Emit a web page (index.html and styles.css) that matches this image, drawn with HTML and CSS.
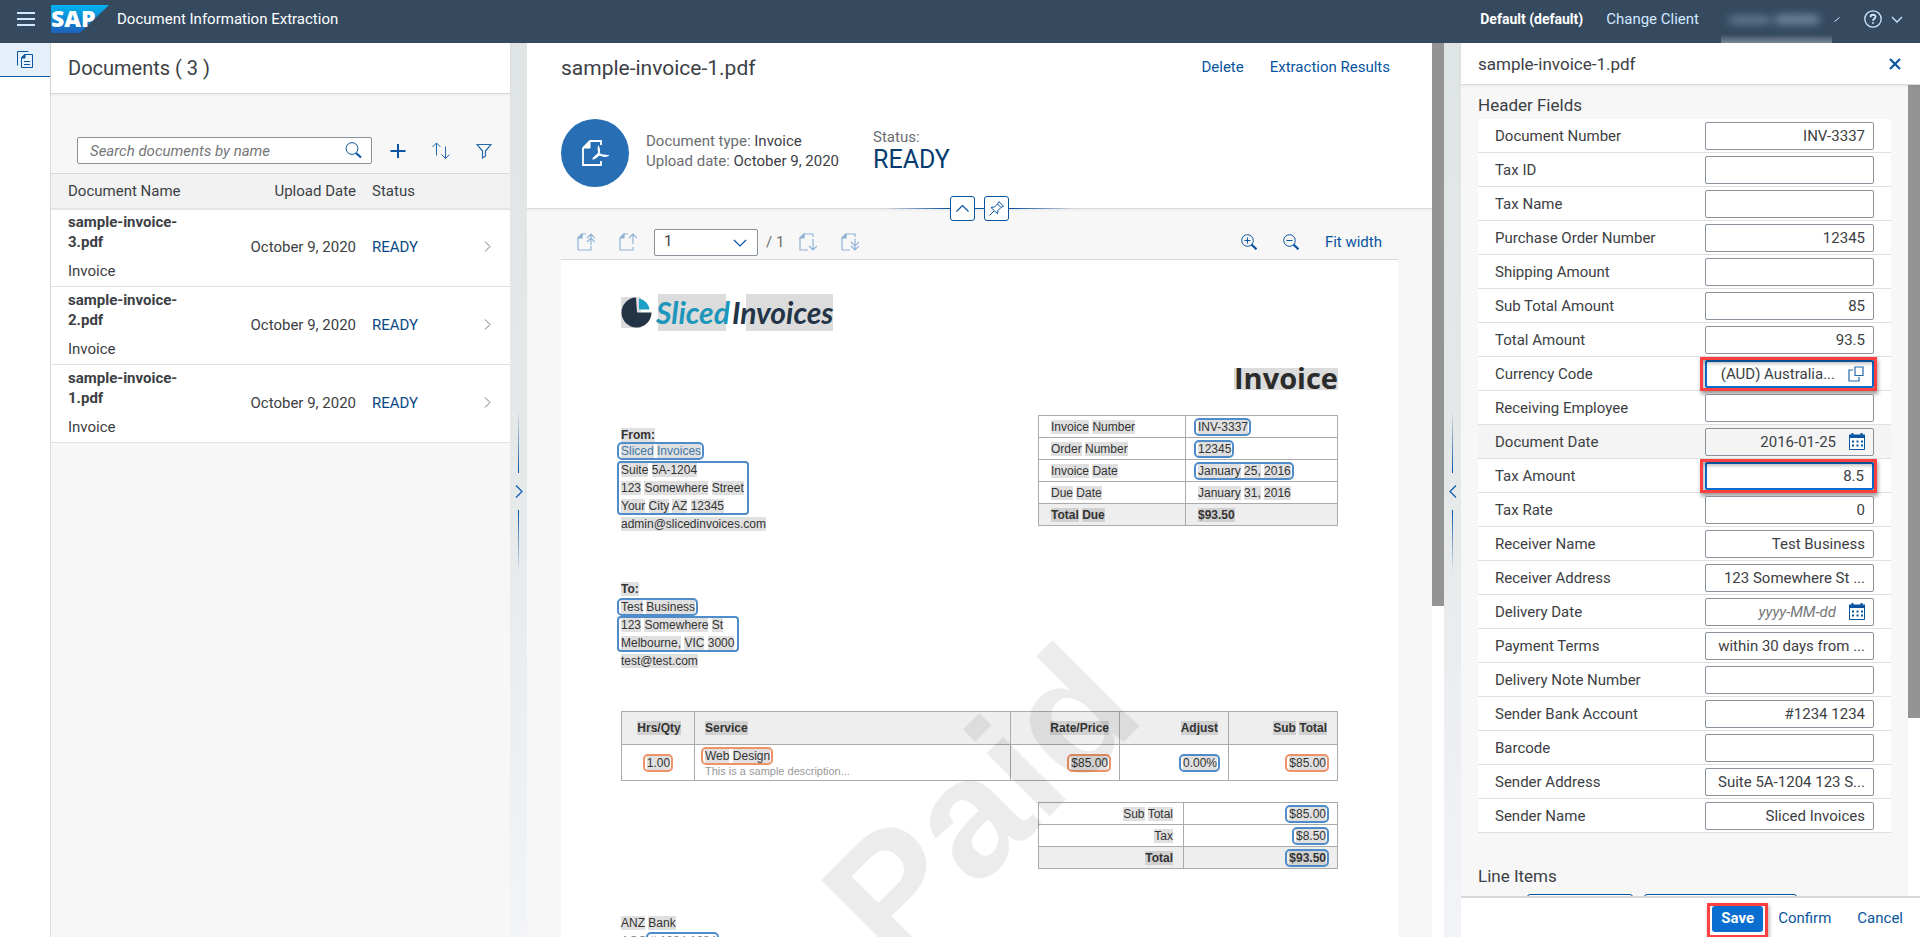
FILE: index.html
```html
<!DOCTYPE html>
<html lang="en">
<head>
<meta charset="utf-8">
<title>Document Information Extraction</title>
<link rel="stylesheet" href="styles.css">
</head>
<body>
<div class="app">
  <header class="shell">
    <button class="icon-btn menu" aria-label="Menu"><svg width="18" height="14" viewBox="0 0 18 14"><path d="M0 1h18M0 7h18M0 13h18" stroke="#d1e8ff" stroke-width="2"/></svg></button>
    <svg class="logo" width="58" height="28" viewBox="0 0 58 28" role="img" aria-label="SAP">
      <defs><linearGradient id="sap" x1="0" y1="0" x2="0" y2="1"><stop offset="0" stop-color="#00b4f0"/><stop offset="1" stop-color="#1e5fbb"/></linearGradient></defs>
      <path d="M0 0H58L29 28H0Z" fill="url(#sap)"/>
      <text x="0" y="22" class="logo-text">SAP</text>
    </svg>
    <h1 class="shell-title">Document Information Extraction</h1>
    <span class="client">Default (default)</span>
    <a class="shell-link" href="#">Change Client</a>
    <span class="user"><i class="smudge"></i><i class="smudge wide"></i></span>
    <svg class="tick" width="6" height="5" viewBox="0 0 6 5"><path d="M0.500 4.500L5.500 0.500" stroke="#d1e8ff" fill="none"/></svg>
    <button class="icon-btn help" aria-label="Help"><svg width="18" height="18" viewBox="0 0 18 18" fill="none" stroke="#d1e8ff" stroke-width="1.300"><circle cx="9" cy="9" r="8.200"/><path d="M6.500 7.200C6.500 3.900 11.600 4 11.500 7C11.400 8.900 9 8.700 9 10.800M9 12.200V13.800" stroke-width="1.800"/></svg></button>
    <svg width="12" height="7" viewBox="0 0 12 7" fill="none" stroke="#d1e8ff" stroke-width="1.300"><path d="M1 1l5 5 5-5"/></svg>
  </header>

  <div class="workspace">
    <nav class="side">
      <a class="side-item" href="#" aria-label="Documents"><svg width="16" height="18" viewBox="0 0 16 18" fill="none" stroke="#0854a0"><path d="M0.500 14.500V0.500H11.500M7.500 3.500H15.500V16.500H4.500V6.500L7.500 3.500ZM7.500 3.500V6.500H4.500M7 10.500h6M7 13.500h6"/><path d="M4.500 7L8 3.500V7Z" fill="#0854a0"/></svg></a>
    </nav>

    <section class="docs">
      <h2 class="docs-title">Documents ( 3 )</h2>
      <div class="docs-tools">
        <div class="search">
          <input type="search" aria-label="Search documents by name" placeholder="Search documents by name">
          <svg width="17" height="17" viewBox="0 0 17 17" fill="none" stroke="#0854a0"><circle cx="7" cy="6.500" r="5.900"/><path d="M11 11l5 4.500" stroke-width="2.200"/></svg>
        </div>
        <button class="icon-btn" aria-label="Add"><svg width="16" height="16" viewBox="0 0 16 16"><path d="M8 1v14M0.500 8h15" stroke="#0854a0" stroke-width="2"/></svg></button>
        <button class="icon-btn" aria-label="Sort"><svg width="18" height="18" viewBox="0 0 18 18" fill="none" stroke="#2469af"><path d="M4.500 13.500V1M0.500 5l4-4 4 4M13.500 4.500V16.500M9.500 12.500l4 4 4-4"/></svg></button>
        <button class="icon-btn" aria-label="Filter"><svg width="16" height="16" viewBox="0 0 16 16" fill="none" stroke="#2469af" stroke-width="1.200"><path d="M1 1.500H15L9.500 8V13L6.500 15V8Z"/></svg></button>
      </div>
      <table class="doc-table">
        <thead><tr><th class="c-name">Document Name</th><th class="c-date">Upload Date</th><th class="c-status">Status</th><th class="c-nav"></th></tr></thead>
        <tbody>
          <tr><td><b>sample-invoice-<br>3.pdf</b><span>Invoice</span></td><td class="c-date">October 9, 2020</td><td class="ready">READY</td><td class="c-nav"><svg width="7" height="11" viewBox="0 0 7 11" fill="none" stroke="#777"><path d="M1 0.500l5 5-5 5"/></svg></td></tr>
          <tr><td><b>sample-invoice-<br>2.pdf</b><span>Invoice</span></td><td class="c-date">October 9, 2020</td><td class="ready">READY</td><td class="c-nav"><svg width="7" height="11" viewBox="0 0 7 11" fill="none" stroke="#777"><path d="M1 0.500l5 5-5 5"/></svg></td></tr>
          <tr><td><b>sample-invoice-<br>1.pdf</b><span>Invoice</span></td><td class="c-date">October 9, 2020</td><td class="ready">READY</td><td class="c-nav"><svg width="7" height="11" viewBox="0 0 7 11" fill="none" stroke="#777"><path d="M1 0.500l5 5-5 5"/></svg></td></tr>
        </tbody>
      </table>
    </section>

    <div class="splitter"><i class="line up"></i><svg width="8" height="13" viewBox="0 0 8 13" fill="none" stroke="#0a5cb0" stroke-width="1.200"><path d="M1 0.500l6 6-6 6"/></svg><i class="line down"></i></div>

    <main class="viewer">
      <div class="viewer-body">
        <div class="viewer-head">
          <div class="head-row">
            <h2>sample-invoice-1.pdf</h2>
            <a href="#">Delete</a>
            <a href="#">Extraction Results</a>
          </div>
          <div class="head-info">
            <span class="avatar"><svg width="27" height="26" viewBox="0 0 27 26" fill="none" stroke="#fff" stroke-width="1.800"><path d="M19 5V1H8L1 8V25H19V21"/><path d="M1 8L8 1V8Z" fill="#fff" stroke-width="1"/><path d="M16.500 6.500C18 9 17 12 17.500 13.500C19 15.500 22 15 26 15.500C22 17.500 19.500 15.500 17.500 15C15.500 15.500 13.500 19 11 19C12 16 15.500 15.500 16.500 13C17 11 15.500 8 16.500 6.500Z" fill="#fff" stroke-width="1.200"/></svg></span>
            <div class="attrs">
              <p><span>Document type:</span> Invoice</p>
              <p><span>Upload date:</span> October 9, 2020</p>
            </div>
            <div class="status"><p>Status:</p><strong>READY</strong></div>
          </div>
          <div class="head-toggle">
            <button aria-label="Collapse header"><svg width="13" height="7" viewBox="0 0 13 7" fill="none" stroke="#0854a0" stroke-width="1.200"><path d="M0.500 6.500l6-6 6 6"/></svg></button>
            <button aria-label="Pin header"><svg width="15" height="15" viewBox="0 0 15 15" fill="none" stroke="#0854a0"><path d="M0.500 14.500L5 10M2 6.500L8.500 12.800L9 9.500L12 6.500L14.500 5L9.800 0.600L8.500 3L5.500 6ZM8.500 3L12 6.500"/></svg></button>
          </div>
        </div>

        <div class="pager">
          <button class="icon-btn" disabled aria-label="First page"><svg width="18" height="18" viewBox="0 0 18 18" fill="none" stroke="#8fb3d6" stroke-width="1.200"><path d="M9 1H5L1 5V17H14V13"/><path d="M1 5L5 1V5Z" fill="#8fb3d6"/><path d="M14 12V1M10 5l4-4 4 4M10 9l4-4 4 4"/></svg></button>
          <button class="icon-btn" disabled aria-label="Previous page"><svg width="18" height="18" viewBox="0 0 18 18" fill="none" stroke="#8fb3d6" stroke-width="1.200"><path d="M9 1H5L1 5V17H14V14"/><path d="M1 5L5 1V5Z" fill="#8fb3d6"/><path d="M14 11V1M10 5l4-4 4 4"/></svg></button>
          <span class="page-pick"><select aria-label="Page"><option>1</option></select><svg width="14" height="8" viewBox="0 0 14 8" fill="none" stroke="#0854a0" stroke-width="1.200"><path d="M1 1l6 6 6-6"/></svg></span>
          <span class="total">/ 1</span>
          <button class="icon-btn" disabled aria-label="Next page"><svg width="18" height="18" viewBox="0 0 18 18" fill="none" stroke="#8fb3d6" stroke-width="1.200"><path d="M9 17H1V5L5 1H14V4"/><path d="M1 5L5 1V5Z" fill="#8fb3d6"/><path d="M14 6V17M10 13l4 4 4-4"/></svg></button>
          <button class="icon-btn" disabled aria-label="Last page"><svg width="18" height="18" viewBox="0 0 18 18" fill="none" stroke="#8fb3d6" stroke-width="1.200"><path d="M9 17H1V5L5 1H14V4"/><path d="M1 5L5 1V5Z" fill="#8fb3d6"/><path d="M14 6V17M10 13l4 4 4-4M10 9l4 4 4-4"/></svg></button>
          <span class="grow"></span>
          <button class="icon-btn" aria-label="Zoom in"><svg width="16" height="16" viewBox="0 0 16 16" fill="none" stroke="#0854a0"><circle cx="6.500" cy="6.500" r="5.800"/><path d="M3.500 6.500h6M6.500 3.500v6"/><path d="M10.500 10.500l5 4.800" stroke-width="2.200"/></svg></button>
          <button class="icon-btn" aria-label="Zoom out"><svg width="16" height="16" viewBox="0 0 16 16" fill="none" stroke="#0854a0"><circle cx="6.500" cy="6.500" r="5.800"/><path d="M3.500 6.500h6"/><path d="M10.500 10.500l5 4.800" stroke-width="2.200"/></svg></button>
          <a href="#">Fit width</a>
        </div>

        <article class="page">
          <span class="watermark">Paid</span>
          <div class="brand">
            <svg width="31" height="31" viewBox="0 0 31 31"><path d="M0 0H20V31H0Z" fill="#dcdcdc"/><path d="M15 0.500A15 15 0 1 0 30.500 15.500H16Z" fill="#233447"/><path d="M18 1.500A13 13 0 0 1 28.500 12.500H18Z" fill="#1b9fc6"/></svg>
            <span class="brand-name"><em class="sliced">Sliced</em><em class="inv">Invoices</em></span>
          </div>
          <h3 class="inv-title"><mark>Invoice</mark></h3>
          <div class="parties">
            <div class="addresses">
              <div class="from">
                <p class="tight"><b><mark>From:</mark></b></p>
                <p class="tight"><span class="box"><a href="#"><mark>Sliced</mark> <mark>Invoices</mark></a></span></p>
                <div class="addr"><p><mark>Suite</mark> <mark>5A-1204</mark></p><p><mark>123</mark> <mark>Somewhere</mark> <mark>Street</mark></p><p><mark>Your</mark> <mark>City</mark> <mark>AZ</mark> <mark>12345</mark></p></div>
                <p><mark>admin@slicedinvoices.com</mark></p>
              </div>
              <div class="to">
                <p><b><mark>To:</mark></b></p>
                <p><span class="box"><mark>Test</mark> <mark>Business</mark></span></p>
                <div class="addr narrow"><p><mark>123</mark> <mark>Somewhere</mark> <mark>St</mark></p><p><mark>Melbourne,</mark> <mark>VIC</mark> <mark>3000</mark></p></div>
                <p><mark>test@test.com</mark></p>
              </div>
            </div>
            <table class="grid meta">
              <tr><td><mark>Invoice</mark> <mark>Number</mark></td><td><span class="box"><mark>INV-3337</mark></span></td></tr>
              <tr><td><mark>Order</mark> <mark>Number</mark></td><td><span class="box"><mark>12345</mark></span></td></tr>
              <tr><td><mark>Invoice</mark> <mark>Date</mark></td><td><span class="box"><mark>January</mark> <mark>25,</mark> <mark>2016</mark></span></td></tr>
              <tr><td><mark>Due</mark> <mark>Date</mark></td><td><mark>January</mark> <mark>31,</mark> <mark>2016</mark></td></tr>
              <tr class="sum"><td><mark>Total</mark> <mark>Due</mark></td><td><mark>$93.50</mark></td></tr>
            </table>
          </div>
          <table class="grid items">
            <thead><tr><th class="i-qty"><mark>Hrs/Qty</mark></th><th class="i-svc"><mark>Service</mark></th><th class="i-num"><mark>Rate/Price</mark></th><th class="i-num"><mark>Adjust</mark></th><th class="i-num"><mark>Sub</mark> <mark>Total</mark></th></tr></thead>
            <tbody><tr><td class="i-qty"><span class="box line-item"><mark>1.00</mark></span></td><td class="i-svc"><span class="box line-item"><mark>Web</mark> <mark>Design</mark></span><small>This is a sample description...</small></td><td class="i-num"><span class="box line-item"><mark>$85.00</mark></span></td><td class="i-num"><span class="box"><mark>0.00%</mark></span></td><td class="i-num"><span class="box line-item"><mark>$85.00</mark></span></td></tr></tbody>
          </table>
          <table class="grid totals">
            <tr><td><mark>Sub</mark> <mark>Total</mark></td><td><span class="box"><mark>$85.00</mark></span></td></tr>
            <tr><td><mark>Tax</mark></td><td><span class="box"><mark>$8.50</mark></span></td></tr>
            <tr class="sum"><td><mark>Total</mark></td><td><span class="box"><mark>$93.50</mark></span></td></tr>
          </table>
          <div class="bank">
            <p><mark>ANZ</mark> <mark>Bank</mark></p>
            <p class="acc">ACC <span class="box"># 1234 1234</span></p>
          </div>
        </article>
      </div>
      <div class="scroll"><i class="thumb main-thumb"></i></div>
    </main>

    <div class="splitter"><i class="line up"></i><svg width="8" height="13" viewBox="0 0 8 13" fill="none" stroke="#0a5cb0" stroke-width="1.200"><path d="M7 0.500l-6 6 6 6"/></svg><i class="line down"></i></div>

    <aside class="panel">
      <div class="panel-head"><h2>sample-invoice-1.pdf</h2><button class="icon-btn" aria-label="Close"><svg width="12" height="12" viewBox="0 0 12 12"><path d="M1 1l10 10M11 1L1 11" stroke="#0854a0" stroke-width="2.200"/></svg></button></div>
      <div class="panel-mid">
        <form class="fields">
          <h3>Header Fields</h3>
          <ul>
            <li><label for="f1">Document Number</label><span class="field"><input id="f1" value="INV-3337"></span></li>
            <li><label for="f2">Tax ID</label><span class="field"><input id="f2"></span></li>
            <li><label for="f3">Tax Name</label><span class="field"><input id="f3"></span></li>
            <li><label for="f4">Purchase Order Number</label><span class="field"><input id="f4" value="12345"></span></li>
            <li><label for="f5">Shipping Amount</label><span class="field"><input id="f5"></span></li>
            <li><label for="f6">Sub Total Amount</label><span class="field"><input id="f6" value="85"></span></li>
            <li><label for="f7">Total Amount</label><span class="field"><input id="f7" value="93.5"></span></li>
            <li><label for="f8">Currency Code</label><span class="field active flagged"><input id="f8" value="(AUD) Australia..."><svg width="16" height="16" viewBox="0 0 16 16" fill="none" stroke="#2469af" stroke-width="1.200"><path d="M7 1H15V9.500H7ZM5 4H1V15H11V11"/></svg></span></li>
            <li><label for="f9">Receiving Employee</label><span class="field"><input id="f9"></span></li>
            <li class="hover"><label for="f10">Document Date</label><span class="field"><input id="f10" value="2016-01-25"><svg width="16" height="17" viewBox="0 0 16 17"><path d="M0.500 3.500H15.500V16.500H0.500Z" fill="#fff" stroke="#0854a0"/><path d="M0 1.500H16V5H0Z" fill="#0854a0"/><path d="M3.500 0v3M12.500 0v3" stroke="#0854a0" stroke-width="2"/><path d="M3 8.500h11M3 12.500h11" stroke="#0854a0" stroke-width="2" stroke-dasharray="2 2.500"/></svg></span></li>
            <li><label for="f11">Tax Amount</label><span class="field active flagged"><input id="f11" value="8.5"></span></li>
            <li><label for="f12">Tax Rate</label><span class="field"><input id="f12" value="0"></span></li>
            <li><label for="f13">Receiver Name</label><span class="field"><input id="f13" value="Test Business"></span></li>
            <li><label for="f14">Receiver Address</label><span class="field"><input id="f14" value="123 Somewhere St ..."></span></li>
            <li><label for="f15">Delivery Date</label><span class="field"><input id="f15" placeholder="yyyy-MM-dd"><svg width="16" height="17" viewBox="0 0 16 17"><path d="M0.500 3.500H15.500V16.500H0.500Z" fill="#fff" stroke="#0854a0"/><path d="M0 1.500H16V5H0Z" fill="#0854a0"/><path d="M3.500 0v3M12.500 0v3" stroke="#0854a0" stroke-width="2"/><path d="M3 8.500h11M3 12.500h11" stroke="#0854a0" stroke-width="2" stroke-dasharray="2 2.500"/></svg></span></li>
            <li><label for="f16">Payment Terms</label><span class="field"><input id="f16" value="within 30 days from ..."></span></li>
            <li><label for="f17">Delivery Note Number</label><span class="field"><input id="f17"></span></li>
            <li><label for="f18">Sender Bank Account</label><span class="field"><input id="f18" value="#1234 1234"></span></li>
            <li><label for="f19">Barcode</label><span class="field"><input id="f19"></span></li>
            <li><label for="f20">Sender Address</label><span class="field"><input id="f20" value="Suite 5A-1204 123 S..."></span></li>
            <li><label for="f21">Sender Name</label><span class="field"><input id="f21" value="Sliced Invoices"></span></li>
          </ul>
          <h3 class="line-title">Line Items</h3>
          <div class="line-btns"><button type="button" aria-label="Add item"></button><button type="button" class="wide" aria-label="Delete item"></button></div>
        </form>
        <div class="scroll"><i class="thumb panel-thumb"></i></div>
      </div>
      <footer class="panel-foot">
        <span class="save-mark"><button class="save">Save</button></span>
        <button class="text-btn">Confirm</button>
        <button class="text-btn">Cancel</button>
      </footer>
    </aside>
  </div>
</div>
</body>
</html>
```
FILE: styles.css
```css
* { box-sizing: border-box; }
body { margin: 0; font: 15px/20px Roboto, "Liberation Sans", sans-serif; color: #3c4044; }
h1, h2, h3, p, ul { margin: 0; padding: 0; font-weight: 400; }
button, input, select { font: inherit; color: inherit; }
a { color: #0854a0; text-decoration: none; }
svg { display: block; flex: none; }
.app { display: flex; flex-direction: column; height: 100vh; overflow: hidden; }
.icon-btn { display: flex; align-items: center; justify-content: center; padding: 0; border: 0; background: none; }

/* shell bar */
.shell { display: flex; align-items: center; flex: none; height: 43px; padding: 0 17px 5px 17px; background: #354a5f; color: #fff; }
.logo { margin-left: 16px; overflow: visible; }
.logo-text { font: 800 23px "Open Sans", sans-serif; fill: #fff; }
.shell-title { flex: 1; margin-left: 8px; font-size: 15px; }
.client { font-size: 14px; font-weight: 700; }
.shell-link { margin-left: 23px; color: #d1e8ff; }
.user { display: flex; align-items: center; gap: 4px; align-self: flex-start; width: 111px; height: 45px; margin: 0 2px 0 22px; padding: 0 8px 6px; background: linear-gradient(#354a5f 76%, #8a96a3); }
.smudge { width: 42px; height: 6px; border-radius: 3px; background: #7189a2; filter: blur(4px); }
.smudge.wide { width: 44px; height: 9px; }
.help { margin: 0 9px 0 24px; }
.workspace { display: flex; flex: 1; min-height: 0; background: linear-gradient(#dfe4e5, #e6e9ea 50%, #f2f4f8); }

/* side navigation */
.side { flex: none; width: 51px; border-right: 1px solid #d9d9d9; background: #fff; }
.side-item { display: flex; align-items: center; justify-content: center; height: 34px; border-bottom: 1px solid #0854a0; background: #e5f0fa; }

/* document list */
.docs { flex: none; width: 459px; background: #f7f7f7; }
.docs-title { height: 51px; padding: 0 17px; border-bottom: 1px solid #d9d9d9; background: #fff; box-shadow: 0 1px 3px #0001; font-size: 20px; line-height: 50px; }
.docs-tools { display: flex; align-items: center; gap: 26px; height: 79px; padding: 34px 18px 0 26px; }
.search { display: flex; align-items: center; flex: 1; height: 27px; margin-right: -8px; padding: 0 9px 0 12px; border: 1px solid #89919a; border-radius: 2px; background: #fff; }
.search input { flex: 1; min-width: 0; padding: 0; border: 0; outline: 0; background: none; }
::placeholder { font-style: italic; color: #74777a; opacity: 1; }
.doc-table { width: 100%; border-collapse: collapse; table-layout: fixed; border-top: 1px solid #d9d9d9; }
.doc-table th { height: 35px; padding: 0; border-bottom: 2px solid #e5e5e5; background: #f2f2f2; font-weight: 400; text-align: left; }
.doc-table td { height: 78px; padding: 2px 0 4px; border-bottom: 1px solid #e0e0e0; background: #fff; line-height: 20px; }
.doc-table .c-name, .doc-table td:first-child { padding-left: 17px; }
.doc-table td span { display: block; margin-top: 9px; }
.doc-table b { font-weight: 700; }
.doc-table .c-name { width: 180px; }
.doc-table .c-date { width: 125px; text-align: right; }
.doc-table .c-status { width: 90px; padding-left: 16px; }
.doc-table .ready { padding-left: 16px; color: #0a4a86; }
.doc-table .c-nav svg { margin-left: auto; margin-right: 19px; }

.splitter { display: flex; flex: none; flex-direction: column; align-items: center; justify-content: center; gap: 12px; width: 17px; padding-top: 2px; }
.line { width: 1px; height: 63px; background: linear-gradient(#0854a000, #0854a0); }
.line.down { background: linear-gradient(#0854a0, #0854a000); }

/* document viewer */
.viewer { display: flex; flex: 1; min-width: 0; background: #f7f7f7; }
.viewer-body { flex: 1; min-width: 0; overflow: hidden; }
.viewer-head { position: relative; height: 166px; padding: 0 34px; border-bottom: 1px solid #d9d9d9; background: #fff; box-shadow: 0 1px 3px #0001; }
.head-row { display: flex; gap: 26px; padding: 11px 8px 0 0; line-height: 26px; }
.head-row h2 { flex: 1; font-size: 21px; line-height: 28px; }
.head-info { display: flex; align-items: center; padding-top: 37px; }
.avatar { display: flex; align-items: center; justify-content: center; width: 68px; height: 68px; border-radius: 50%; background: #286eb4; }
.attrs { margin-left: 17px; padding-bottom: 4px; }
.attrs span, .status p { color: #6a6d70; }
.status { margin-left: 34px; padding-bottom: 6px; }
.status strong { display: block; color: #053b70; font-size: 25px; font-weight: 400; line-height: 26px; }
.head-toggle { position: absolute; left: 50%; bottom: -13px; display: flex; justify-content: center; gap: 9px; width: 190px; transform: translateX(-50%); background: linear-gradient(90deg, #0854a000, #0854a0 33%, #0854a0 67%, #0854a000) center / 100% 1px no-repeat; }
.head-toggle button { display: flex; align-items: center; justify-content: center; width: 25px; height: 25px; padding: 0; border: 1px solid #0854a0; border-radius: 3px; background: #fff; }
.pager { display: flex; align-items: flex-start; height: 51px; margin: 0 34px; padding: 16px 16px 0; border-bottom: 1px solid #d9d9d9; line-height: 34px; }
.pager .icon-btn { height: 34px; margin-right: 24px; }
.pager .icon-btn:nth-child(2) { margin-right: 17px; }
.pager .grow ~ .icon-btn { margin-right: 26px; }
.page-pick { position: relative; display: flex; width: 104px; margin: 4px 8px 0 0; }
.page-pick select { width: 100%; height: 27px; padding: 0 9px 3px; border: 1px solid #89919a; border-radius: 2px; background: #fff; appearance: none; line-height: 20px; }
.page-pick svg { position: absolute; right: 11px; top: 10px; pointer-events: none; }
.total { width: 33px; color: #6a6d70; }
.grow { flex: 1; }

/* rendered invoice */
.page { position: relative; height: 1180px; margin: 0 34px; padding: 34px 60px; background: #fff; color: #333; font: 12px/18px "Liberation Sans", Arial, sans-serif; }
mark { background: #0000001f; color: inherit; }
.watermark { position: absolute; left: 50%; top: 543px; transform: translate(-50%, -50%) rotate(-45deg); color: #00000013; font-size: 169px; font-weight: 700; line-height: 167px; pointer-events: none; }
.brand { display: flex; align-items: center; height: 37px; }
.brand-name { display: flex; margin-left: 2px; font: italic 700 30px/37px Lato, sans-serif; }
.sliced { padding: 0 2px; background: linear-gradient(90deg, #fff 4px, #dcdcdc 4px, #dcdcdc 72px, #fff 72px); color: #1c96bb; }
.inv { background: linear-gradient(90deg, #fff 14px, #dcdcdc 14px); color: #233447; }
.inv-title { margin-top: 28px; text-align: right; font: 700 29px/38px "Open Sans", sans-serif; color: #2b2b2b; }
.inv-title mark { background: linear-gradient(#dcdcdc, #dcdcdc) center 60% / 100% 22px no-repeat; }
.parties { display: flex; justify-content: space-between; align-items: flex-start; margin-top: 18px; }
.addresses { padding-top: 12px; }
.from .tight { line-height: 16px; }
.from a { color: #3f77a8; }
.to { margin-top: 47px; }
.addr { width: 132px; margin: 2px 0 0 -4px; padding-left: 4px; border-radius: 4px; box-shadow: inset 0 0 0 2px #4f8cc9; white-space: nowrap; }
.addr.narrow { width: 122px; margin-top: 0; }
.box { border-radius: 3px; outline: 2px solid #4f8cc9; outline-offset: 0; padding: 0 1px 0 2px; margin-left: -2px; }
.box.line-item { outline-color: #ee9367; }
.grid { border-collapse: collapse; table-layout: fixed; }
.grid td, .grid th { padding: 0 10px 0 12px; border: 1px solid #aaa; }
.meta, .totals { width: 300px; }
.meta td, .totals td { height: 22px; }
.meta td:first-child { width: 147px; }
.sum, .items thead { background: #eee; font-weight: 700; }
.items { width: 100%; margin-top: 41px; }
.items th { height: 33px; }
.items td { height: 36px; line-height: 14px; }
.items .i-qty { width: 73px; text-align: center; }
.items .i-svc { padding-left: 10px; text-align: left; }
.items .i-num { width: 109px; text-align: right; }
.items small { display: block; padding-top: 2px; color: #999; font-size: 11px; line-height: 12px; }
.totals { margin: 21px 0 0 auto; }
.totals td { text-align: right; }
.totals td:first-child { width: 145px; }
.bank { margin-top: 45px; }
.acc { color: #888; }

.scroll { flex: none; width: 12px; background: #fff; }
.thumb { display: block; background: #949494; }
.main-thumb { height: 63%; }
.panel-thumb { height: 78%; }

/* extraction panel */
.panel { display: flex; flex: none; flex-direction: column; width: 459px; background: #f7f7f7; }
.panel-head { position: relative; display: flex; align-items: center; justify-content: space-between; flex: none; height: 42px; padding: 0 19px 0 17px; border-bottom: 1px solid #d9d9d9; background: #fff; box-shadow: 0 1px 3px #0001; }
.panel-head h2 { font-size: 17px; }
.panel-mid { display: flex; flex: 1; min-height: 0; }
.fields { flex: 1; overflow: hidden; padding: 6px 17px 0; }
.fields h3 { font-size: 17px; line-height: 28px; }
.fields ul { list-style: none; }
.fields li { display: flex; align-items: center; justify-content: space-between; height: 34px; padding: 0 17px; border-bottom: 1px solid #e0e0e0; background: #fff; }
.fields li.hover, .hover .field { background: #f4f4f4; }
.field { position: relative; display: flex; align-items: center; width: 169px; height: 28px; padding: 0 8px; border: 1px solid #89919a; border-radius: 2px; background: #fff; }
.field input { flex: 1; min-width: 0; padding: 0; border: 0; outline: 0; background: none; text-align: right; }
.field svg { margin-left: 13px; }
.field.active { border: 2px solid #0a6ed1; padding: 0 8px; }
.flagged::after { content: ""; position: absolute; inset: -5px -5px -5px -7px; border: 3px solid #ff4040; box-shadow: 1px 3px 4px #0006, inset 1px 3px 4px #0005; pointer-events: none; }
.fields .line-title { margin-top: 29px; }
.line-btns { display: flex; gap: 11px; margin: 4px 0 0 49px; }
.line-btns button { width: 106px; height: 28px; border: 1px solid #0854a0; border-radius: 3px; background: #fff; }
.line-btns .wide { width: 153px; }
.panel-foot { display: flex; align-items: flex-start; flex: none; height: 41px; padding: 5px 17px 0 0; border-top: 2px solid #d9d9d9; background: #fff; justify-content: flex-end; }
.save-mark { height: 35px; padding: 0 2px; border: 3px solid #ff4040; box-shadow: 1px 2px 4px #0005; }
.save { display: block; width: 51px; height: 26px; padding: 0 0 2px; border: 0; border-radius: 3px; background: #0a6ed1; color: #fff; font-weight: 700; }
.text-btn { padding: 0; margin-left: 26px; border: 0; background: none; color: #0854a0; line-height: 30px; }
.save-mark + .text-btn { margin-left: 10px; }
```
